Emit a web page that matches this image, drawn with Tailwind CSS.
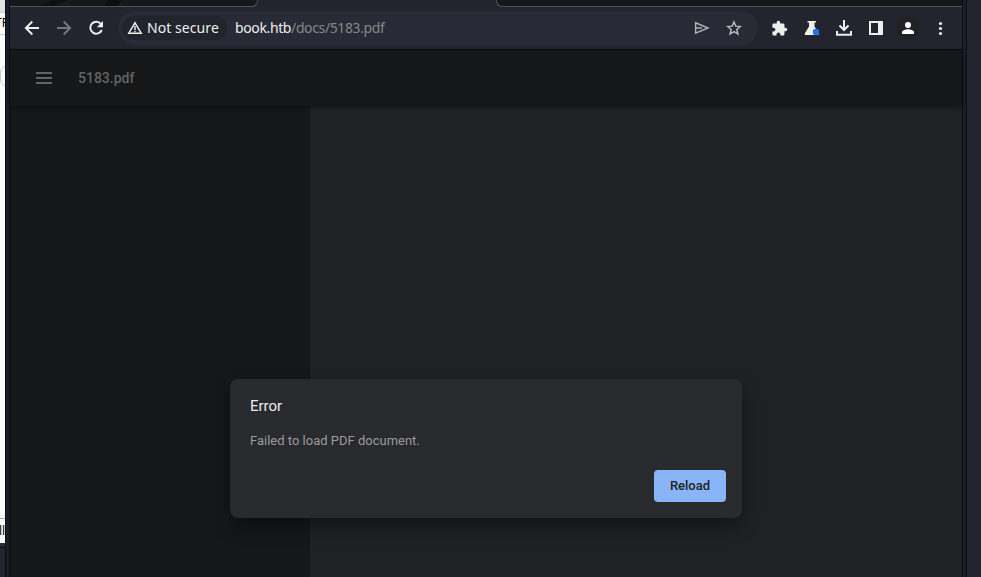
<!DOCTYPE html>
<html lang="en">
<head>
<meta charset="utf-8">
<title>5183.pdf</title>
<script src="https://cdn.jsdelivr.net/npm/@tailwindcss/browser@4"></script>
</head>
<body class="w-[981px] h-[577px] overflow-hidden flex bg-[#22242e] font-['Roboto',sans-serif]">
<!-- window behind, left edge -->
<aside class="w-[5px] h-full shrink-0 overflow-hidden flex flex-col bg-[#22242e] text-black font-['Noto_Sans',sans-serif]">
  <div class="h-[13px] shrink-0 bg-[#e2e2e2] border-b border-[#c9cdca]"></div>
  <div class="h-[22px] shrink-0 bg-[#fcfcfc] border-b border-[#c5d0cd] text-[12px] leading-[20px] whitespace-nowrap"><span class="-ml-[5px]">TF</span></div>
  <div class="h-[31px] shrink-0 bg-[#fcfcfc]"></div>
  <div class="h-5 shrink-0 bg-[#fcfcfc]"><div class="h-5 w-5 border border-[#c8c8c8] rounded-md"></div></div>
  <div class="h-[433px] shrink-0 bg-[#fcfcfc] border-b border-[#b5a9aa]"></div>
  <div class="h-[24px] shrink-0 bg-[#fcfcfc] text-[12px] leading-[24px] whitespace-nowrap"><span class="-ml-px">ll</span></div>
  <div class="h-[5px] shrink-0 bg-[#272b30] border-b border-[#0b0c10]"></div>
</aside>
<div class="w-[5px] shrink-0 bg-[#1b1d27] border-x border-[#0c0d12]"></div>
<main class="w-[952px] shrink-0 h-full flex flex-col">
  <div class="h-[7px] shrink-0 flex bg-[#22242d] overflow-hidden">
    <div class="w-[248px] h-[7px] bg-[#17181d] border-b border-r border-[#53545a] rounded-br-[6px] overflow-hidden">
      <svg class="block" width="247" height="6" viewBox="0 0 247 6"><path d="M30 6Q38 1 46 0H58Q50 2 44 6zM93 6Q97 2 98 0H112Q110 4 106 6z" fill="#0d0e12"/></svg>
    </div>
    <div class="w-[238px]"></div>
    <div class="flex-1 h-[7px] bg-[#17181d] border-b border-l border-[#53545a] rounded-bl-[6px]"></div>
  </div>
  <header class="h-[43px] shrink-0 flex items-center bg-[#22242e] border-b border-[#090a0c] text-[#eeeeec]">
    <div class="w-[108px] pl-3 flex items-center gap-3">
      <svg width="20" height="20" viewBox="0 0 24 24" fill="none" stroke="#eeeeec" stroke-width="2.3"><path d="M20.4 12H5M12.4 4.2 4.6 12l7.8 7.8"/></svg>
      <svg width="20" height="20" viewBox="0 0 24 24" fill="none" stroke="#77787b" stroke-width="2.3"><path d="M3.6 12H19M11.6 4.2l7.8 7.8-7.8 7.8"/></svg>
      <svg width="20" height="20" viewBox="0 0 20 20"><path d="M15.2 6.2A6 6 0 1 0 15.8 12" fill="none" stroke="#eeeeec" stroke-width="2"/><path d="M17 3v6.2h-6.2z" fill="#eeeeec"/></svg>
    </div>
    <div class="w-[640px] h-[34px] rounded-full bg-[#282a35] flex items-center pl-1">
      <div class="w-[105px] h-6 rounded-full bg-[#22242d] flex items-center pl-[5px] gap-[4px]">
        <svg width="16" height="16" viewBox="0 0 16 16"><path d="M8 2.8 14.2 13.2H1.8z" fill="none" stroke="#eeeeec" stroke-width="1.5"/><path d="M8 6v4M8 10.8v1.4" stroke="#eeeeec" stroke-width="1.4"/></svg>
        <span class="font-['Noto_Sans'] text-[14px] leading-5 tracking-[0.07px] whitespace-nowrap">Not secure</span>
      </div>
      <div class="ml-2 w-[454px] font-['Noto_Sans'] text-[14px] leading-5 tracking-[-0.38px] whitespace-nowrap">book.htb<span class="text-[#85868a]">/docs/5183.pdf</span></div>
      <div class="flex items-center gap-4 pl-[5px]">
        <svg width="16" height="16" viewBox="0 0 16 16" fill="none" stroke="#aeafb1" stroke-width="1.5"><path d="M1.600 2.800 14 8 1.600 13.200zM2 8h6"/></svg>
        <svg width="16" height="16" viewBox="0 0 16 16" fill="none" stroke="#b8b9bb" stroke-width="1.5"><path d="M8 2l1.750 4.150 4.550.4-3.450 3 1.050 4.450L8 11.650 4.100 14l1.050-4.450-3.450-3 4.550-.4z"/></svg>
      </div>
    </div>
    <div class="flex items-center pl-[13px]">
      <svg class="block" width="17" height="17" viewBox="0 0 24 24" fill="#eeeeec"><path d="M20.5 11H19V7c0-1.1-.9-2-2-2h-4V3.500a2.500 2.500 0 0 0-5 0V5H4c-1.100 0-1.990.9-1.990 2v3.800H3.500c1.490 0 2.700 1.210 2.700 2.700s-1.210 2.700-2.700 2.700H2V20c0 1.100.9 2 2 2h3.800v-1.500c0-1.490 1.210-2.700 2.700-2.700s2.700 1.210 2.700 2.700V22H17c1.100 0 2-.9 2-2v-4h1.500a2.500 2.500 0 0 0 0-5z"/></svg>
      <svg class="ml-[14px]" width="20" height="20" viewBox="0 0 20 20"><path d="M5.500 3h8.500v1.500h-1.500v4l4 6.500q1 2-1 2H4q-2 0-1-2l4-6.500v-4H5.500z" fill="#eeeeec"/><circle cx="14" cy="14" r="3.200" fill="#1a73e8"/></svg>
      <svg class="ml-3" width="20" height="20" viewBox="0 0 20 20" fill="none" stroke="#eeeeec" stroke-width="2"><path d="M10 2v9.500M5.500 7.500 10 12l4.500-4.500M3 13v3.700h14V13"/></svg>
      <svg class="ml-3" width="20" height="20" viewBox="0 0 20 20"><path d="M3 3h14v14H3zM5 5v10h7V5z" fill="#eeeeec" fill-rule="evenodd"/></svg>
      <div class="ml-[11px] w-[22px] h-[22px] rounded-full bg-[#202124] flex items-center justify-center">
        <svg width="18" height="18" viewBox="0 0 18 18" fill="#fff"><circle cx="9" cy="6" r="3"/><path d="M3 15v-1.800C3 11.200 7 10.200 9 10.200s6 1 6 3V15z"/></svg>
      </div>
      <svg class="ml-[11px]" width="20" height="20" viewBox="0 0 20 20" fill="#eeeeec"><circle cx="10.500" cy="5.500" r="1.600"/><circle cx="10.500" cy="10.500" r="1.600"/><circle cx="10.500" cy="15.500" r="1.600"/></svg>
    </div>
  </header>
  <section class="flex-1 flex flex-col relative bg-[#202123]">
    <div class="h-14 shrink-0 flex items-center bg-[#161719] pl-[26px] shadow-[0_1px_3px_rgba(0,0,0,0.45)] relative">
      <svg width="16" height="12" viewBox="0 0 16 12" fill="#626364"><path d="M0 0h16v2H0zM0 5h16v2H0zM0 10h16v2H0z"/></svg>
      <span class="ml-[26px] text-[14px] font-medium text-[#626364]">5183.pdf</span>
    </div>
    <div class="flex-1 flex">
      <div class="w-[300px] bg-[#161719]"></div>
      <div class="flex-1 bg-[#202123]"></div>
    </div>
    <div class="absolute left-[220px] top-[329px] w-[512px] h-[139px] rounded-lg bg-[#292a2d] shadow-[0_8px_18px_rgba(0,0,0,0.4)] flex flex-col px-5 pt-[15px]">
      <h1 class="text-[15px] leading-6 text-[#e8eaed]">Error</h1>
      <p class="mt-[13px] text-[13px] leading-5 text-[#9a9b9e]">Failed to load PDF document.</p>
      <button class="mt-[19px] -mr-1 self-end w-[72px] h-8 rounded-[4px] bg-[#8ab4f8] text-[#202124] text-[13px] font-medium">Reload</button>
    </div>
  </section>
</main>
<div class="w-[5px] shrink-0 bg-[#1b1d27] border-x border-[#0c0d12]"></div>
<div class="flex-1 bg-[#22242e]"></div>
</body>
</html>
